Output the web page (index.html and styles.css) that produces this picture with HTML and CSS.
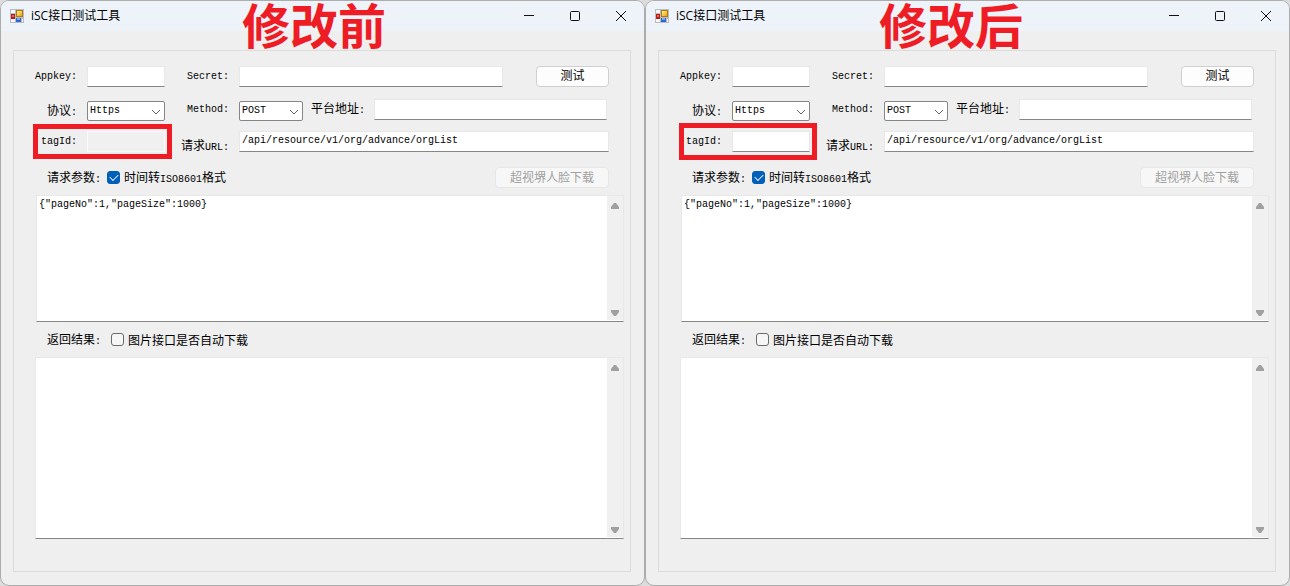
FILE: index.html
```html
<!DOCTYPE html>
<html lang="zh-CN">
<head>
    <meta charset="UTF-8">
    <meta name="viewport" content="width=device-width, initial-scale=1.0">
    <title>iSC接口测试工具</title>
    <link rel="stylesheet" href="styles.css">
</head>
<body>

    <!-- Shared icons -->
    <svg class="defs" width="0" height="0">
        <defs>
            <linearGradient id="gold" x1="0" y1="0" x2="1" y2="1">
                <stop offset="0" stop-color="#fff0a0"/>
                <stop offset="1" stop-color="#eda200"/>
            </linearGradient>
        </defs>
        <symbol id="app" viewBox="0 0 14 14">
            <rect width="14" height="14" fill="#b9bcc1"/>
            <path d="M1 1h4v3H1zM1 10h4v3H1zM12 10h1v3h-1z" fill="#f7f8fa"/>
            <rect x="1" y="5" width="4" height="5" fill="#b51e12"/>
            <rect x="2" y="6" width="2" height="2" fill="#e8695a"/>
            <rect x="6" y="1" width="7" height="7" fill="#b07a10"/>
            <rect x="7" y="2" width="5" height="5" fill="url(#gold)"/>
            <rect x="6" y="9" width="5" height="4" fill="#2f65d0"/>
            <rect x="7" y="9" width="3" height="2" fill="#79a8f5"/>
        </symbol>
        <symbol id="chevron" viewBox="0 0 10 6">
            <path d="M1 1l4 4 4-4" fill="none" stroke="#666" stroke-width="1"/>
        </symbol>
        <symbol id="up" viewBox="0 0 8 6">
            <path d="M3 0h2l3 4v2H0V4z" fill="#a0a0a0"/>
        </symbol>
        <symbol id="down" viewBox="0 0 8 6">
            <path d="M0 0h8v2L5 6H3L0 2z" fill="#a0a0a0"/>
        </symbol>
    </svg>

    <!-- Before -->
    <div class="window before">
        <div class="titlebar">
            <svg class="app-icon"><use href="#app"/></svg>
            <span class="title">iSC接口测试工具</span>
            <button class="win-btn" aria-label="最小化"><svg width="10" height="10"><path d="M0 4.5h10"/></svg></button>
            <button class="win-btn" aria-label="最大化"><svg width="10" height="10"><rect x=".5" y=".5" width="9" height="9" rx="1"/></svg></button>
            <button class="win-btn" aria-label="关闭"><svg width="10" height="10"><path d="M0 0l10 10M10 0L0 10"/></svg></button>
        </div>
        <div class="note">修改前</div>

        <form class="group">
            <div class="row">
                <label class="en" for="appkey1">Appkey:</label>
                <input type="text" id="appkey1">
                <label class="en" for="secret1">Secret:</label>
                <div class="cell secret">
                    <input type="text" id="secret1">
                    <button type="button" class="button test">测试</button>
                </div>
            </div>

            <div class="row combos">
                <label class="cn" for="protocol1">协议<span class="en">:</span></label>
                <div class="select">
                    <select id="protocol1"><option>Https</option><option>Http</option></select>
                    <svg><use href="#chevron"/></svg>
                </div>
                <label class="en" for="method1">Method:</label>
                <div class="cell platform">
                    <div class="select method">
                        <select id="method1"><option>POST</option><option>GET</option></select>
                        <svg><use href="#chevron"/></svg>
                    </div>
                    <label class="cn" for="host1">平台地址<span class="en">:</span></label>
                    <input type="text" id="host1">
                </div>
            </div>

            <div class="row">
                <div class="tag">
                    <label class="en" for="tag1">tagId:</label>
                    <input type="text" id="tag1" disabled>
                </div>
                <label class="low" for="url1">请求<span class="en">URL:</span></label>
                <input type="text" id="url1" value="/api/resource/v1/org/advance/orgList">
            </div>

            <div class="bar params">
                <label class="cn" for="params1">请求参数<span class="en">:</span></label>
                <input type="checkbox" id="iso1" checked>
                <label class="cn" for="iso1">时间转<span class="en">ISO8601</span>格式</label>
                <button type="button" class="button download" disabled>超视堺人脸下载</button>
            </div>
            <div class="memo request">
                <textarea id="params1">{"pageNo":1,"pageSize":1000}</textarea>
                <div class="scrollbar"><svg><use href="#up"/></svg><svg><use href="#down"/></svg></div>
            </div>

            <div class="bar results">
                <label class="cn" for="result1">返回结果<span class="en">:</span></label>
                <input type="checkbox" id="auto1">
                <label class="cn" for="auto1">图片接口是否自动下载</label>
            </div>
            <div class="memo result">
                <textarea id="result1"></textarea>
                <div class="scrollbar"><svg><use href="#up"/></svg><svg><use href="#down"/></svg></div>
            </div>
        </form>
    </div>

    <!-- After -->
    <div class="window after">
        <div class="titlebar">
            <svg class="app-icon"><use href="#app"/></svg>
            <span class="title">iSC接口测试工具</span>
            <button class="win-btn" aria-label="最小化"><svg width="10" height="10"><path d="M0 4.5h10"/></svg></button>
            <button class="win-btn" aria-label="最大化"><svg width="10" height="10"><rect x=".5" y=".5" width="9" height="9" rx="1"/></svg></button>
            <button class="win-btn" aria-label="关闭"><svg width="10" height="10"><path d="M0 0l10 10M10 0L0 10"/></svg></button>
        </div>
        <div class="note">修改后</div>

        <form class="group">
            <div class="row">
                <label class="en" for="appkey2">Appkey:</label>
                <input type="text" id="appkey2">
                <label class="en" for="secret2">Secret:</label>
                <div class="cell secret">
                    <input type="text" id="secret2">
                    <button type="button" class="button test">测试</button>
                </div>
            </div>

            <div class="row combos">
                <label class="cn" for="protocol2">协议<span class="en">:</span></label>
                <div class="select">
                    <select id="protocol2"><option>Https</option><option>Http</option></select>
                    <svg><use href="#chevron"/></svg>
                </div>
                <label class="en" for="method2">Method:</label>
                <div class="cell platform">
                    <div class="select method">
                        <select id="method2"><option>POST</option><option>GET</option></select>
                        <svg><use href="#chevron"/></svg>
                    </div>
                    <label class="cn" for="host2">平台地址<span class="en">:</span></label>
                    <input type="text" id="host2">
                </div>
            </div>

            <div class="row">
                <div class="tag">
                    <label class="en" for="tag2">tagId:</label>
                    <input type="text" id="tag2">
                </div>
                <label class="low" for="url2">请求<span class="en">URL:</span></label>
                <input type="text" id="url2" value="/api/resource/v1/org/advance/orgList">
            </div>

            <div class="bar params">
                <label class="cn" for="params2">请求参数<span class="en">:</span></label>
                <input type="checkbox" id="iso2" checked>
                <label class="cn" for="iso2">时间转<span class="en">ISO8601</span>格式</label>
                <button type="button" class="button download" disabled>超视堺人脸下载</button>
            </div>
            <div class="memo request">
                <textarea id="params2">{"pageNo":1,"pageSize":1000}</textarea>
                <div class="scrollbar"><svg><use href="#up"/></svg><svg><use href="#down"/></svg></div>
            </div>

            <div class="bar results">
                <label class="cn" for="result2">返回结果<span class="en">:</span></label>
                <input type="checkbox" id="auto2">
                <label class="cn" for="auto2">图片接口是否自动下载</label>
            </div>
            <div class="memo result">
                <textarea id="result2"></textarea>
                <div class="scrollbar"><svg><use href="#up"/></svg><svg><use href="#down"/></svg></div>
            </div>
        </form>
    </div>

</body>
</html>
```
FILE: styles.css
```css
* {
    box-sizing: border-box;
}

body {
    margin: 0;
    min-height: 100vh;
    display: flex;
    background-color: #dcdcdc;
    color: #000;
    font-family: "Liberation Mono", "Noto Sans CJK SC", monospace;
    font-size: 12px;
    line-height: 14px;
}

.defs {
    position: absolute;
}

.window {
    position: relative;
    flex: 1;
    min-width: 0;
    display: flex;
    flex-direction: column;
    background-color: #efefef;
    border: 1px solid #acacac;
    border-radius: 9px;
}

/* Title bar */
.titlebar {
    height: 30px;
    display: flex;
    align-items: center;
    padding-left: 9px;
    padding-bottom: 1px;
    border-radius: 8px 8px 0 0;
    background-color: #eef3f9;
}

.app-icon {
    width: 14px;
    height: 14px;
    margin-right: 7px;
}

.title {
    flex: 1;
    font-family: "Open Sans", "Noto Sans CJK SC", sans-serif;
}

.win-btn {
    width: 46px;
    height: 29px;
    padding: 0;
    border: 0;
    background: none;
}

.win-btn svg {
    display: block;
    margin: auto;
    fill: none;
    stroke: #111;
}

/* Red remarks over the windows */
.note {
    position: absolute;
    top: 0;
    left: 241px;
    font-family: "Noto Sans CJK SC", sans-serif;
    font-size: 48px;
    line-height: 44px;
    font-weight: bold;
    color: #ee1c25;
}

.after .note {
    left: 233px;
}

/* Form */
.group {
    flex: 1;
    display: flex;
    flex-direction: column;
    margin: 19px 13px 13px 12px;
    padding: 15px 6px 32px 22px;
    border: 1px solid #dcdcdc;
}

.row {
    display: grid;
    grid-template-columns: 41px 78px 54px 1fr;
    column-gap: 10px;
    align-items: center;
    margin-right: 15px;
    margin-bottom: 11px;
}

.row label {
    justify-self: end;
    white-space: nowrap;
}

.combos {
    min-height: 23px;
    padding-top: 1px;
    margin-bottom: 10px;
}

.en {
    font-size: 10px;
}

/* Chinese glyphs ride high on the line, so push them down */
.cn {
    padding-top: 4px;
}

.row .low {
    align-self: end;
    margin-bottom: -2px;
    line-height: 12px;
}

.cell {
    display: flex;
    align-items: center;
}

input[type="text"] {
    width: 100%;
    min-width: 0;
    height: 21px;
    padding: 0 2px 2px;
    border: 1px solid #e8e8e8;
    border-bottom-color: #868686;
    background-color: #fff;
    font: inherit;
    font-size: 10px;
    color: #000;
}

input[type="text"]:disabled {
    background-color: #f0f0f0;
    border-color: #f9f9f9;
}

.secret {
    gap: 33px;
}

.platform {
    align-items: flex-end;
}

.platform label {
    margin: 0 9px 3px 8px;
}

.platform input[type="text"] {
    margin-right: 2px;
    margin-bottom: 1px;
}

.select {
    position: relative;
    align-self: end;
    height: 20px;
}

.method {
    flex: 0 0 64px;
}

.select select {
    display: block;
    width: 100%;
    height: 20px;
    padding: 0 2px;
    border: 1px solid #868686;
    border-radius: 2px;
    background-color: #fff;
    appearance: none;
    font: inherit;
    font-size: 10px;
    color: #000;
}

.select svg {
    position: absolute;
    right: 4px;
    top: 8px;
    width: 10px;
    height: 6px;
    pointer-events: none;
}

.tag {
    position: relative;
    grid-column: span 2;
    display: grid;
    grid-template-columns: 41px 78px;
    column-gap: 10px;
    align-items: center;
}

/* Frame that marks the changed field */
.tag::after {
    content: "";
    position: absolute;
    inset: -7px -7px -7px -3px;
    border: 5px solid #ee1c25;
    pointer-events: none;
}

.after .tag::after {
    inset: -8px -7px -8px -2px;
}

.button {
    height: 21px;
    padding: 0;
    border: 1px solid #d0d0d0;
    border-radius: 4px;
    background-color: #fdfdfd;
    font: inherit;
    color: #000;
}

.test {
    flex: 0 0 73px;
}

.download {
    width: 114px;
    margin-left: auto;
    padding-top: 2px;
}

.button:disabled {
    border-color: #e6e6e6;
    background-color: #f7f7f7;
    color: #a0a0a0;
}

.bar {
    display: flex;
    align-items: center;
    padding: 0 15px 0 11px;
}

.params {
    height: 21px;
    margin: 4px 0 7px;
}

.results {
    height: 35px;
}

input[type="checkbox"] {
    appearance: none;
    display: grid;
    place-items: center;
    width: 13px;
    height: 13px;
    margin: 0 4px 0 6px;
    border: 1px solid #6b6b6b;
    border-radius: 3px;
    background-color: #f6f6f6;
}

.results input[type="checkbox"] {
    margin-left: 10px;
}

input[type="checkbox"]:checked {
    border-color: #005fb8;
    background-color: #005fb8;
}

input[type="checkbox"]:checked::before {
    content: "";
    width: 7px;
    height: 4px;
    margin-bottom: 2px;
    border: solid #e6f0fa;
    border-width: 0 0 1px 1px;
    transform: rotate(-45deg);
}

/* Multi-line boxes */
.memo {
    display: flex;
    border: 1px solid #e8e8e8;
    border-bottom-color: #868686;
    background-color: #fff;
}

.request {
    height: 127px;
}

.result {
    flex: 1;
    min-height: 80px;
    margin-left: -1px;
}

.memo textarea {
    flex: 1;
    padding: 2px;
    border: 0;
    background: none;
    resize: none;
    outline: none;
    overflow: hidden;
    font: inherit;
    font-size: 10px;
    color: #000;
}

.scrollbar {
    width: 16px;
    margin-bottom: 1px;
    padding: 7px 4px 4px;
    display: flex;
    flex-direction: column;
    justify-content: space-between;
    background-color: #f0f0f0;
}

.scrollbar svg {
    width: 8px;
    height: 6px;
}
```
